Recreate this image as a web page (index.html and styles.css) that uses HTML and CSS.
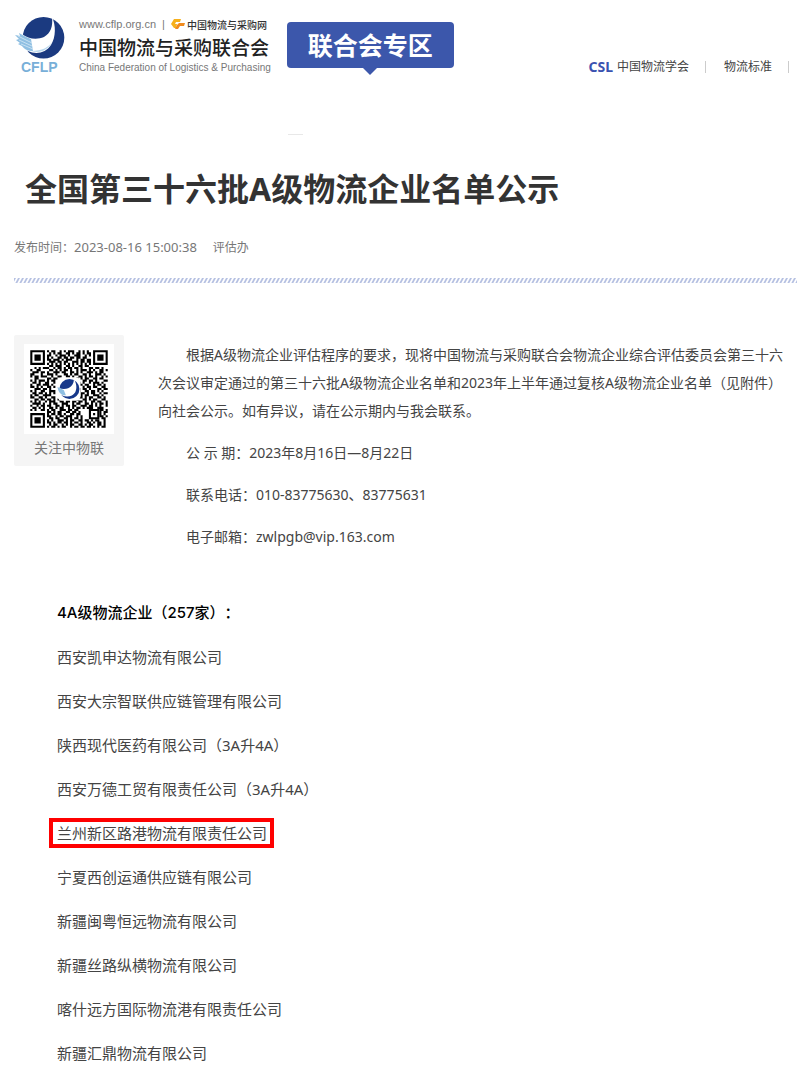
FILE: index.html
```html
<!DOCTYPE html>
<html lang="zh-CN">

<head>
    <meta charset="utf-8">
    <meta name="viewport" content="width=device-width, initial-scale=1">
    <title>全国第三十六批A级物流企业名单公示</title>
    <link rel="stylesheet" href="styles.css">
</head>

<body>
    <header class="header">
        <div class="brand">
            <svg class="brand-logo" viewBox="0 0 52 58" role="img" aria-label="CFLP">
                <circle cx="28.5" cy="21.8" r="20.8" fill="#1b3a80" />
                <path d="M37 1C38 10 36 17 29 21C22 24 13 23 7 18L0 21L5 32L13 35C21 39 31 37 36 29C41 21 41 9 37 1Z" fill="#fff" />
                <path d="M4 17C9 20 13 22 16 23L18 35C13 35 9 33 7 30L3 28L5 27L1 24L4 23L0 19L5 20Z" fill="#8fbfe2" />
                <path d="M3 20L17 27M4 24L17 30M6 28L18 33" stroke="#d5e8f5" stroke-width="0.8" fill="none" />
                <path d="M16 35C25 38 33 34 37 26C34 31 27 35 16 35Z" fill="#b9d8ee" />
                <text class="logo-text" x="6" y="56">CFLP</text>
            </svg>
            <div class="brand-text">
                <div class="brand-site">
                    <a href="#">www.cflp.org.cn</a>
                    <span>|</span>
                    <svg class="site-icon" viewBox="0 0 14 12" aria-hidden="true">
                        <path d="M3 1H10L9 4H5L4 6H6L5 10L3 10L0 6Z" fill="#f6b01c" />
                        <path d="M8 5H14L13 8H9L7 11H4L6 7Z" fill="#f08a1d" />
                    </svg>
                    <a class="site-name" href="#">中国物流与采购网</a>
                </div>
                <div class="brand-name">中国物流与采购联合会</div>
                <div class="brand-en">China Federation of Logistics &amp; Purchasing</div>
            </div>
        </div>
        <a class="zone" href="#">联合会专区</a>
        <nav class="nav">
            <a href="#"><b>CSL</b> 中国物流学会</a>
            <a href="#">物流标准</a>
        </nav>
    </header>
    <hr class="tick">

    <main>
        <h1 class="title">全国第三十六批A级物流企业名单公示</h1>
        <div class="meta">
            <span>发布时间：<time>2023-08-16 15:00:38</time></span>
            <span>评估办</span>
        </div>
        <svg class="divider" aria-hidden="true">
            <defs>
                <pattern id="slashes" width="4" height="6" patternUnits="userSpaceOnUse" patternTransform="skewX(-28)">
                    <rect width="2" height="6" fill="#b6c1e2" />
                </pattern>
            </defs>
            <rect width="100%" height="100%" fill="url(#slashes)" />
        </svg>

        <div class="article">
            <figure class="qr-card">
                <svg class="qr" viewBox="-3 -3 43 43" role="img" aria-label="二维码">
                    <path id="qr-cells" />
                    <g id="finders">
                        <path d="M0 0h7v7h-7zM1 1v5h5v-5zM2 2h3v3h-3z" fill-rule="evenodd" />
                        <path d="M30 0h7v7h-7zM31 1v5h5v-5zM32 2h3v3h-3z" fill-rule="evenodd" />
                        <path d="M0 30h7v7h-7zM1 31v5h5v-5zM2 32h3v3h-3z" fill-rule="evenodd" />
                        <path d="M28 28h5v5h-5zM29 29v3h3v-3zM30 30h1v1h-1z" fill-rule="evenodd" />
                    </g>
                    <rect x="13" y="13" width="11" height="11" rx="2" fill="#fff" />
                    <circle cx="18.7" cy="18.5" r="4.8" fill="#17388a" />
                    <path d="M20.8 13.7C21 17 18 19.5 13.5 18L13 20C16 23 20 22.5 21.5 20C22.5 18 22 15.5 20.8 13.7Z" fill="#fff" />
                    <path d="M13 17.5L16 19L17 21.5C15 21.5 13.5 20.5 13 17.5Z" fill="#8fbfe2" />
                </svg>
                <figcaption>关注中物联</figcaption>
            </figure>

            <div class="content">
                <p>根据A级物流企业评估程序的要求，现将中国物流与采购联合会物流企业综合评估委员会第三十六次会议审定通过的第三十六批A级物流企业名单和2023年上半年通过复核A级物流企业名单（见附件）向社会公示。如有异议，请在公示期内与我会联系。</p>
                <p>公 示 期：2023年8月16日—8月22日</p>
                <p>联系电话：010-83775630、83775631</p>
                <p>电子邮箱：zwlpgb@vip.163.com</p>
            </div>
        </div>

        <section class="companies">
            <h2>4A级物流企业（257家）：</h2>
            <ul>
                <li>西安凯申达物流有限公司</li>
                <li>西安大宗智联供应链管理有限公司</li>
                <li>陕西现代医药有限公司（3A升4A）</li>
                <li>西安万德工贸有限责任公司（3A升4A）</li>
                <li><mark>兰州新区路港物流有限责任公司</mark></li>
                <li>宁夏西创运通供应链有限公司</li>
                <li>新疆闽粤恒远物流有限公司</li>
                <li>新疆丝路纵横物流有限公司</li>
                <li>喀什远方国际物流港有限责任公司</li>
                <li>新疆汇鼎物流有限公司</li>
            </ul>
        </section>
    </main>

    <script src="qr.js"></script>
</body>

</html>
```
FILE: styles.css
```css
* {
    margin: 0;
    padding: 0;
    box-sizing: border-box;
}

body {
    background: #fff;
    color: #444;
    font-family: "Noto Sans", "Noto Sans CJK SC", sans-serif;
    font-size: 14px;
}

a {
    color: inherit;
    text-decoration: none;
}

/* Header */
.header {
    display: flex;
    align-items: flex-start;
    padding: 16px 11px 0 15px;
}

.brand {
    display: flex;
    gap: 12px;
}

.brand-logo {
    width: 52px;
    height: 58px;
}

.logo-text {
    font: bold 14px "Liberation Sans", sans-serif;
    fill: #78afd8;
}

.brand-text {
    white-space: nowrap;
}

.brand-site {
    display: flex;
    align-items: center;
    gap: 6px;
    height: 16px;
    color: #777;
    font-family: "Liberation Sans", "Noto Sans CJK SC", sans-serif;
    font-size: 11px;
}

.site-icon {
    width: 14px;
    height: 12px;
}

.site-name {
    margin-left: -4px;
    color: #333;
    font-size: 10px;
    font-weight: 500;
}

.brand-name {
    padding-top: 2px;
    color: #222;
    font-size: 19px;
    font-weight: 500;
    line-height: 28px;
}

.brand-en {
    color: #777;
    font-family: "Liberation Sans", sans-serif;
    font-size: 10px;
    line-height: 12px;
}

.zone {
    position: relative;
    margin: 6px 0 0 16px;
    padding: 0 21px;
    border-radius: 4px;
    background: #3c57ab;
    color: #fff;
    font-size: 25px;
    font-weight: bold;
    line-height: 46px;
    white-space: nowrap;
}

.zone::after {
    content: "";
    position: absolute;
    top: 100%;
    left: 50%;
    margin-left: -7px;
    border: 7px solid transparent;
    border-top-color: #3c57ab;
    border-bottom: 0;
}

.nav {
    display: flex;
    margin: 42px 0 0 auto;
    font-size: 12px;
    line-height: 18px;
    white-space: nowrap;
}

.nav a {
    display: flex;
    align-items: center;
    gap: 4px;
}

.nav a::after {
    content: "";
    height: 12px;
    margin-left: 12px;
    border-right: 1px solid #ccc;
}

.nav a + a {
    margin-left: 18px;
}

.nav b {
    color: #3a52b0;
    font-size: 14px;
}

.tick {
    width: 15px;
    margin: 58px 0 0 288px;
    border: 0;
    border-top: 1px solid #e8e8e8;
}

/* Title */
.title {
    margin: 31px 0 0 25px;
    color: #333;
    font-size: 32px;
    line-height: 46px;
}

.meta {
    display: flex;
    align-items: baseline;
    gap: 16px;
    margin: 26px 14px 0;
    color: #777;
    font-size: 12px;
    line-height: 18px;
}

.meta time {
    font-size: 13px;
}

.divider {
    display: block;
    width: calc(100% - 17px);
    height: 5px;
    margin: 21px 3px 0 14px;
}

/* Article */
.article {
    display: flex;
    align-items: flex-start;
    gap: 34px;
    padding: 52px 13px 0 14px;
}

.qr-card {
    flex: none;
    width: 110px;
    padding: 9px 10px 4px;
    border-radius: 2px;
    background: #f5f5f5;
    color: #777;
    text-align: center;
    line-height: 28px;
}

.qr {
    display: block;
    width: 100%;
    background: #fff;
}

.content {
    flex: 1;
    padding-top: 6px;
    line-height: 28px;
}

.content p {
    margin-bottom: 14px;
    text-indent: 2em;
}

/* Company list */
.companies {
    padding: 37px 14px 8px 57px;
    font-size: 15px;
    line-height: 22px;
}

.companies h2 {
    color: #000;
    font-family: Inter, "Noto Sans CJK SC", sans-serif;
    font-size: 15px;
    font-weight: 500;
    text-spacing-trim: space-all;
}

.companies ul {
    display: grid;
    gap: 22px;
    margin-top: 22px;
    list-style: none;
}

.companies mark {
    margin-left: -8px;
    padding: 1px 3px 1px 4px;
    border: 4px solid #f00;
    background: none;
    color: inherit;
}
```
FILE: qr.js
```js
// one string per row, # is a dark cell; the corner finders are in the svg
const rows = [
    "........#.##..#.#.###..#.#.#.........",
    ".........#.#.##..##.#.##.#.##........",
    "........##..#.###.#..###..#.#........",
    "........#.#..##.##.##.##.##..........",
    "........##.###.#.###..#.##.##........",
    ".........###.##.##..###.##.##........",
    "........#.#.#.#.#.#.#.#.#.#.#........",
    ".........##.###..##.#..##.##.........",
    "..#.#.###..#.##.#.##.##.#...##.##.#..",
    "#..##....##.#.#.##.#..#.###.#.#..##.#",
    ".###.##.#..###.##..##.#.#..###.#.##..",
    "##...#..###.#...##.#.##..##.#..###.#.",
    "#.##.###..#..##..##.#..##.#.##.#..#.#",
    "..##....##.##.........#.#.##..##.##..",
    "#.#.###.#.##.............##.##.#...##",
    ".##.#..##..#...........#.#..#.###.#..",
    "#..##.###.#............##.##..#.##.#.",
    "##.#.#..##.#.............#.##.##..##.",
    "..###.##.#.............#.##.#...##.##",
    "#.#..##..###...........#..##.##.#.#..",
    ".##.##.#.#.#............##.#.##..#.##",
    "#.##..####..............#.##..###.#..",
    "##..##.#..##...........##.#.##..##.#.",
    "..##.##.##.#.#........#..##.#.##..##.",
    "#.#.#..#.###..##.##.##.##.#..##.##..#",
    ".####.#..#.##..###..#.##..##.#.#.##.#",
    "#..#.##.##..##.#.##.##..###.##.#.#..#",
    ".##.#.#..##.#.##..#.#.##.#.###..###..",
    "#.#..##.#.##..###.##.##..........##.#",
    "........##.#.##..##.##.#.........#.##",
    "........#.##.##.#..##.##.........#.#.",
    "........##..#.##.###..#.#........##.#",
    ".........##.##..##.#.##.#.........##.",
    "........#.#..###.#.##..##.##.#.##..#.",
    "........##.#.##.##.#.##.#..##.#.##.#.",
    ".........#.##..#.#.##..##.#.##..##.#.",
    "........#.##.#.##..#.##.##.##.#.#.##."
];

let d = "";
rows.forEach((row, y) => {
    for (let x = 0; x < row.length; x++) {
        if (row[x] === "#") d += `M${x} ${y}h1v1h-1z`;
    }
});
document.getElementById("qr-cells").setAttribute("d", d);
```
